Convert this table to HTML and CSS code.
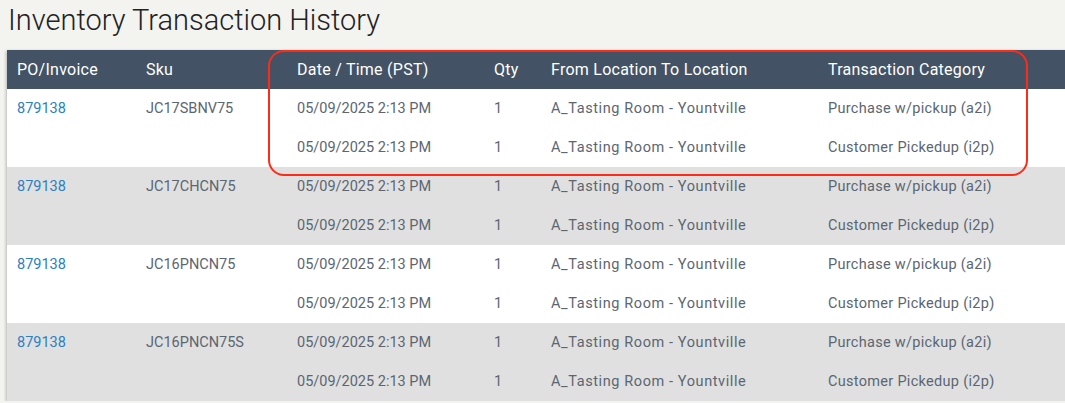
FILE: index.html
```html
<!DOCTYPE html>
<html>
<head>
<meta charset="utf-8">
<link rel="stylesheet" href="styles.css">
</head>
<body>
<h1 class="title">Inventory Transaction History</h1>
<div class="wrap">
<table class="tx">
  <colgroup>
    <col class="c-po"><col class="c-sku"><col class="c-date"><col class="c-qty"><col class="c-loc"><col class="c-cat">
  </colgroup>
  <thead>
    <tr><th>PO/Invoice</th><th>Sku</th><th>Date / Time (PST)</th><th>Qty</th><th>From Location To Location</th><th>Transaction Category</th></tr>
  </thead>
  <tbody class="grp">
    <tr><td><a class="link">879138</a></td><td>JC17SBNV75</td><td>05/09/2025 2:13 PM</td><td>1</td><td class="loc">A_Tasting Room - Yountville</td><td class="cat">Purchase w/pickup (a2i)</td></tr>
    <tr><td></td><td></td><td>05/09/2025 2:13 PM</td><td>1</td><td class="loc">A_Tasting Room - Yountville</td><td class="cat">Customer Pickedup (i2p)</td></tr>
  </tbody>
  <tbody class="grp alt">
    <tr><td><a class="link">879138</a></td><td>JC17CHCN75</td><td>05/09/2025 2:13 PM</td><td>1</td><td class="loc">A_Tasting Room - Yountville</td><td class="cat">Purchase w/pickup (a2i)</td></tr>
    <tr><td></td><td></td><td>05/09/2025 2:13 PM</td><td>1</td><td class="loc">A_Tasting Room - Yountville</td><td class="cat">Customer Pickedup (i2p)</td></tr>
  </tbody>
  <tbody class="grp">
    <tr><td><a class="link">879138</a></td><td>JC16PNCN75</td><td>05/09/2025 2:13 PM</td><td>1</td><td class="loc">A_Tasting Room - Yountville</td><td class="cat">Purchase w/pickup (a2i)</td></tr>
    <tr><td></td><td></td><td>05/09/2025 2:13 PM</td><td>1</td><td class="loc">A_Tasting Room - Yountville</td><td class="cat">Customer Pickedup (i2p)</td></tr>
  </tbody>
  <tbody class="grp alt">
    <tr><td><a class="link">879138</a></td><td>JC16PNCN75S</td><td>05/09/2025 2:13 PM</td><td>1</td><td class="loc">A_Tasting Room - Yountville</td><td class="cat">Purchase w/pickup (a2i)</td></tr>
    <tr><td></td><td></td><td>05/09/2025 2:13 PM</td><td>1</td><td class="loc">A_Tasting Room - Yountville</td><td class="cat">Customer Pickedup (i2p)</td></tr>
  </tbody>
</table>
<div class="highlight"></div>
</div>
</body>
</html>
```
FILE: styles.css
```css
html, body {
  margin: 0;
  padding: 0;
  background: #f3f3f0;
  overflow: hidden;
  font-family: Roboto, "Liberation Sans", sans-serif;
}
.title {
  margin: 0;
  padding: 3px 0 0 8px;
  height: 46px;
  box-sizing: border-box;
  font-weight: 300;
  font-size: 29px;
  color: #222;
}
.wrap {
  position: relative;
  margin-left: 7px;
  width: 1080px;
}
.tx {
  border-collapse: collapse;
  table-layout: fixed;
  width: 1080px;
  background: #fff;
  box-shadow: -1px 1px 3px rgba(0,0,0,0.25);
  margin-top: 4px;
}
.c-po { width: 129px; }
.c-sku { width: 151px; }
.c-date { width: 197px; }
.c-qty { width: 57px; }
.c-loc { width: 277px; }
.tx th {
  background: #435365;
  color: #fff;
  font-weight: 400;
  font-size: 16px;
  letter-spacing: 0.25px;
  text-align: left;
  height: 39px;
  padding: 0 0 0 10px;
}
.tx td {
  height: 39px;
  padding: 0 0 0 10px;
  font-size: 14.5px;
  color: #5b6672;
  white-space: nowrap;
}
.tx td.loc { letter-spacing: 0.6px; }
.tx td.cat { letter-spacing: 0.3px; }
.alt td { background: #e0e0e0; }
.link { color: #2d7fc1; }
.highlight {
  position: absolute;
  left: 261px;
  top: 0;
  width: 756px;
  height: 122px;
  border: 2px solid #ff2b17;
  border-radius: 16px;
}
```
